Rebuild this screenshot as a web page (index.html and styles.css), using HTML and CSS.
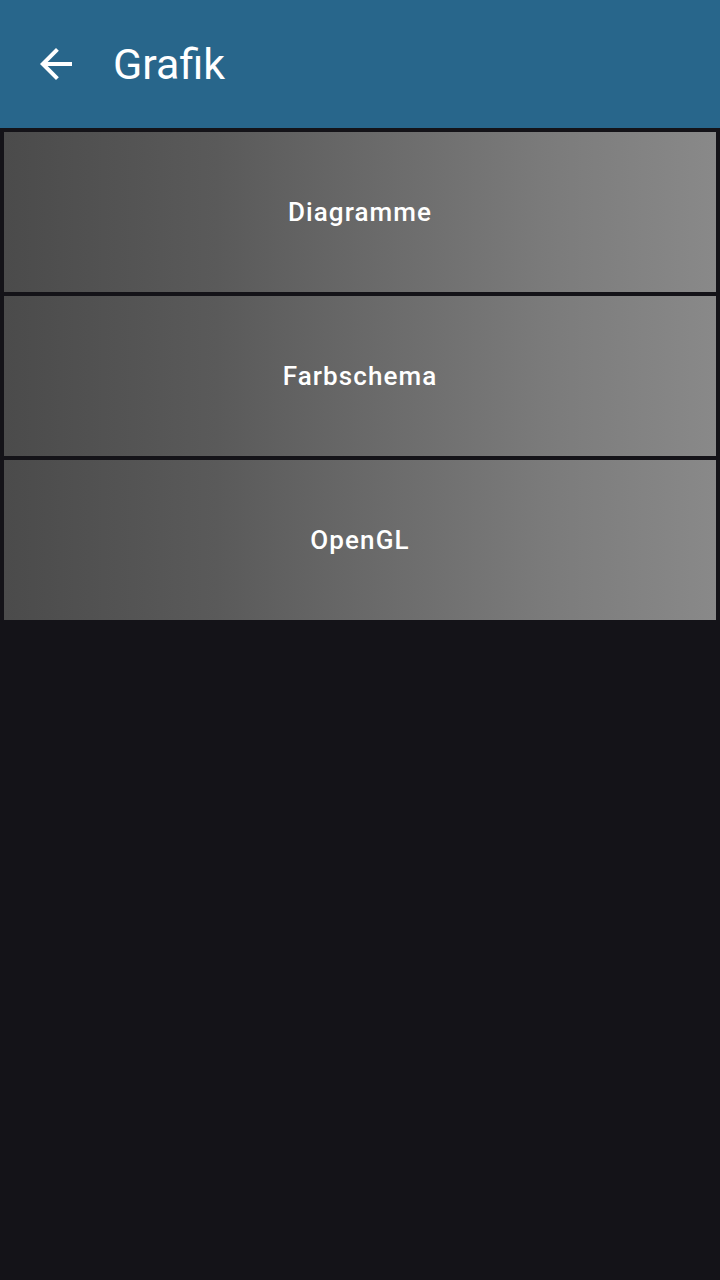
FILE: index.html
```html
<!DOCTYPE html>
<html>
<head>
<meta charset="utf-8">
<link rel="stylesheet" href="styles.css">
</head>
<body>
<header class="appbar">
  <svg class="back" viewBox="0 0 24 24" width="48" height="48"><path fill="#fff" d="M20 11H7.83l5.59-5.59L12 4l-8 8 8 8 1.41-1.41L7.83 13H20v-2z"/></svg>
  <h1 class="title">Grafik</h1>
</header>
<main class="list">
  <div class="item">Diagramme</div>
  <div class="item">Farbschema</div>
  <div class="item">OpenGL</div>
</main>
</body>
</html>
```
FILE: styles.css
```css
html, body {
  margin: 0;
  padding: 0;
  background: #141318;
  font-family: Roboto, "Noto Sans", sans-serif;
}
.appbar {
  height: 128px;
  background: #28668b;
  display: flex;
  align-items: center;
  box-sizing: border-box;
  padding-left: 32px;
}
.back {
  display: block;
  flex: none;
}
.title {
  margin: 0 0 0 33px;
  color: #fff;
  font-weight: 400;
  font-size: 43px;
  line-height: 1;
  position: relative;
  top: 0px;
}
.list {
  display: flex;
  flex-direction: column;
  gap: 4px;
  padding: 4px;
}
.item {
  height: 160px;
  display: flex;
  align-items: center;
  justify-content: center;
  color: #fff;
  font-size: 26px;
  letter-spacing: 1.1px;
  font-weight: 500;
  padding-top: 0;
  background: linear-gradient(to right, #4b4b4b 0%, #4f4f4f 8%, #5a5a5a 30%, #6c6c6c 55%, #7c7c7c 78%, #898989 100%);
}
```
